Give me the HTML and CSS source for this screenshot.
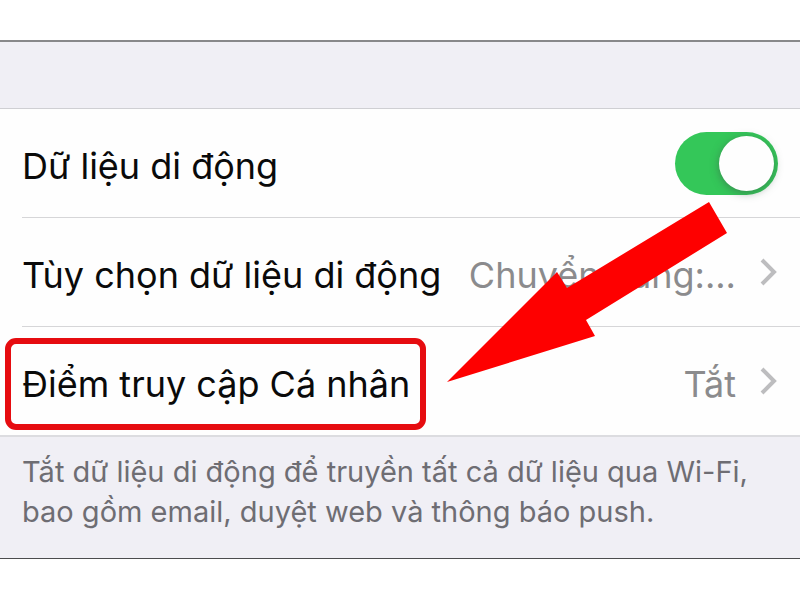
FILE: index.html
```html
<!DOCTYPE html>
<html lang="vi">
<head>
<meta charset="utf-8">
<meta name="viewport" content="width=device-width, initial-scale=1">
<title>Dữ liệu di động</title>
<link rel="stylesheet" href="styles.css">
</head>
<body>
<main class="settings">
  <div class="group">
    <div class="row">
      <label class="label" for="mobile-data">Dữ liệu di động</label>
      <input class="switch" type="checkbox" role="switch" id="mobile-data" checked>
    </div>
    <a class="row" href="#options">
      <span class="label">Tùy chọn dữ liệu di động</span>
      <span class="value">Chuyển vùng:...</span>
      <svg class="chevron" viewBox="0 0 18 28" aria-hidden="true"><path d="M2 2 L14 14 L2 26"/></svg>
    </a>
    <a class="row" href="#hotspot">
      <span class="label marked">Điểm truy cập Cá nhân</span>
      <span class="value">Tắt</span>
      <svg class="chevron" viewBox="0 0 18 28" aria-hidden="true"><path d="M2 2 L14 14 L2 26"/></svg>
    </a>
    <svg class="arrow" viewBox="0 0 280 180" aria-hidden="true"><path d="M262 0 L280 31 L139 118 L148 134 L0 180 L110 70 L120 86 Z"/></svg>
  </div>
  <p class="note">Tắt dữ liệu di động để truyền tất cả dữ liệu qua Wi-Fi, bao gồm email, duyệt web và thông báo push.</p>
</main>
</body>
</html>
```

FILE: styles.css
```css
* {
  box-sizing: border-box;
}

body {
  margin: 0;
  background: #fff;
  color: #0a0a0a;
  font-family: Inter, "Liberation Sans", sans-serif;
}

.settings {
  margin: 40px 0;
  padding-top: 66px;
  background: #f0eff5;
  border-top: 2px solid #88888a;
  border-bottom: 1px solid #4c4c4e;
}

.group {
  position: relative;
  background: #fefefe;
  border-top: 1px solid #cfcfd3;
  border-bottom: 2px solid #dcdce0;
}

.row {
  display: flex;
  align-items: center;
  height: 109px;
  margin-left: 22px;
  padding-right: 22px;
  border-bottom: 1px solid #d6d6d8;
  color: inherit;
  font-size: 36px;
  line-height: 44px;
  text-decoration: none;
  white-space: nowrap;
}

.row:nth-child(3) {
  height: 108px;
  border-bottom: 0;
}

.label {
  margin-right: auto;
}

.label,
.value {
  padding-top: 6px;
}

.marked {
  margin-top: 6px;
  margin-left: -17px;
  padding: 18px 10px 18px 11px;
  border: 6px solid #e60c10;
  border-radius: 11px;
}

.value {
  color: #8b8b8d;
}

.switch {
  appearance: none;
  display: grid;
  flex: none;
  align-items: center;
  justify-items: end;
  width: 103px;
  height: 63px;
  margin: 0;
  padding: 4px;
  border-radius: 32px;
  background: #34c759;
}

.switch::before {
  content: "";
  width: 55px;
  height: 55px;
  border-radius: 50%;
  background: #fefefe;
  box-shadow: 0 2px 8px rgb(60 80 70 / 50%);
}

.chevron {
  flex: none;
  width: 18px;
  height: 28px;
  margin-left: 24px;
  fill: none;
  stroke: #bdbdbf;
  stroke-width: 4;
}

.arrow {
  position: absolute;
  top: 93px;
  left: 447px;
  width: 280px;
  height: 180px;
  fill: #fe0000;
}

.note {
  margin: 0;
  padding: 15px 22px 26px;
  color: #6e6d73;
  font-size: 29px;
  line-height: 40px;
}
```
